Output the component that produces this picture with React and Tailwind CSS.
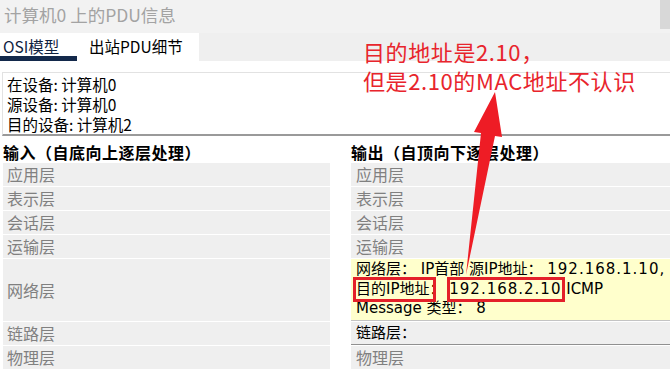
const font = { fontFamily: '"Noto Sans CJK SC", "Noto Sans", sans-serif' };
const wide = { fontFamily: '"DejaVu Sans", "Noto Sans CJK SC", sans-serif' };

const layers = ['应用层', '表示层', '会话层', '运输层'];

const App = () => {
  return (
    <div
      className="relative w-[670px] h-[373px] overflow-hidden bg-white text-black"
      style={font}
    >
      {/* Title bar */}
      <div className="flex h-[33px] bg-[#f2f2f2]">
        <div className="pl-[4px] pt-[2px] text-[17.5px] leading-[26px] text-[#a3a3a3]">
          计算机0 上的PDU信息
        </div>
        <div className="ml-auto w-[10px] h-[29px] bg-[#d8d8d8]"></div>
      </div>

      {/* Tabs */}
      <div className="flex h-[28px] bg-[#efefef]">
        <div className="flex w-[199px] bg-white">
          <div className="relative w-[77px] pl-[3px] text-[15.5px] leading-[26px] text-[#10223f]">
            OSI模型
            <div className="absolute left-0 bottom-0 w-[77px] h-[5px] bg-[#13294b]"></div>
          </div>
          <div className="pl-[12px] text-[15.5px] leading-[26px]">出站PDU细节</div>
        </div>
      </div>

      {/* Device info */}
      <div className="mt-[11px] ml-[2px] h-[64px] border-t border-l border-[#e2e2e2] border-b-2 border-b-[#9a9a9a] pl-[4px] pt-[1px] text-[15.5px] leading-[20px]">
        <div>在设备: 计算机0</div>
        <div>源设备: 计算机0</div>
        <div>目的设备: 计算机2</div>
      </div>

      {/* Columns */}
      <div className="flex pl-[3px] mt-[5px]">
        {/* Input column */}
        <div className="w-[327px] flex flex-col">
          <div className="h-[22px] text-[16px] leading-[22px] font-bold tracking-[0.5px]">输入（自底向上逐层处理）</div>
          <div className="flex flex-col gap-px">
            {layers.map((l) => (
              <div key={l} className="h-[23px] bg-[#efefef] pl-[4px] text-[16px] leading-[23px] text-[#808080]">
                {l}
              </div>
            ))}
            <div className="h-[62px] bg-[#efefef] pl-[4px] flex items-center text-[16px] text-[#808080]">网络层</div>
            <div className="h-[23px] bg-[#efefef] pl-[4px] text-[16px] leading-[23px] text-[#808080]">链路层</div>
            <div className="h-[23px] bg-[#efefef] pl-[4px] text-[16px] leading-[23px] text-[#808080]">物理层</div>
          </div>
        </div>

        {/* Output column */}
        <div className="ml-[21px] flex-1 flex flex-col">
          <div className="h-[22px] text-[16px] leading-[22px] font-bold tracking-[0.5px]">输出（自顶向下逐层处理）</div>
          <div className="flex flex-col gap-px">
            {layers.map((l) => (
              <div key={l} className="h-[23px] bg-[#efefef] pl-[5px] text-[16px] leading-[23px] text-[#808080]">
                {l}
              </div>
            ))}
            <div
              className="h-[62px] bg-[#ffffcc] border-b border-[#c4c4c4] pl-[5px] pt-[1px] text-[15px] leading-[19.5px] whitespace-nowrap"
              style={wide}
            >
              <div>网络层： IP首部 源IP地址： <span className="tracking-[1px]">192.168.1.10,</span></div>
              <div>目的IP地址： <span className="tracking-[1px]">192.168.2.10</span> ICMP</div>
              <div>Message 类型： 8</div>
            </div>
            <div
              className="h-[23px] bg-[#efefef] border-b border-[#909090] pl-[5px] text-[15px] leading-[23px]"
              style={wide}
            >
              链路层：
            </div>
            <div className="h-[23px] bg-[#efefef] pl-[5px] text-[16px] leading-[23px] text-[#808080]">物理层</div>
          </div>
        </div>
      </div>

      {/* Annotation */}
      <div className="absolute left-[363px] top-[37px] text-[22px] leading-[29px] tracking-[0.6px] text-[#e8242c] whitespace-nowrap">
        <div>目的地址是2.10，</div>
        <div>但是2.10的MAC地址不认识</div>
      </div>
      <div className="absolute left-[353px] top-[277px] w-[83px] h-[25px] border-[3px] border-[#e4202a]"></div>
      <div className="absolute left-[447px] top-[277px] w-[118px] h-[25px] border-[3px] border-[#e4202a]"></div>
      <svg className="absolute left-0 top-0" width="670" height="373">
        <polygon
          points="495,92 502,137 495,136 466,275 481,133 474,132"
          fill="#ee1c25"
        />
      </svg>
    </div>
  );
};

export default App;
